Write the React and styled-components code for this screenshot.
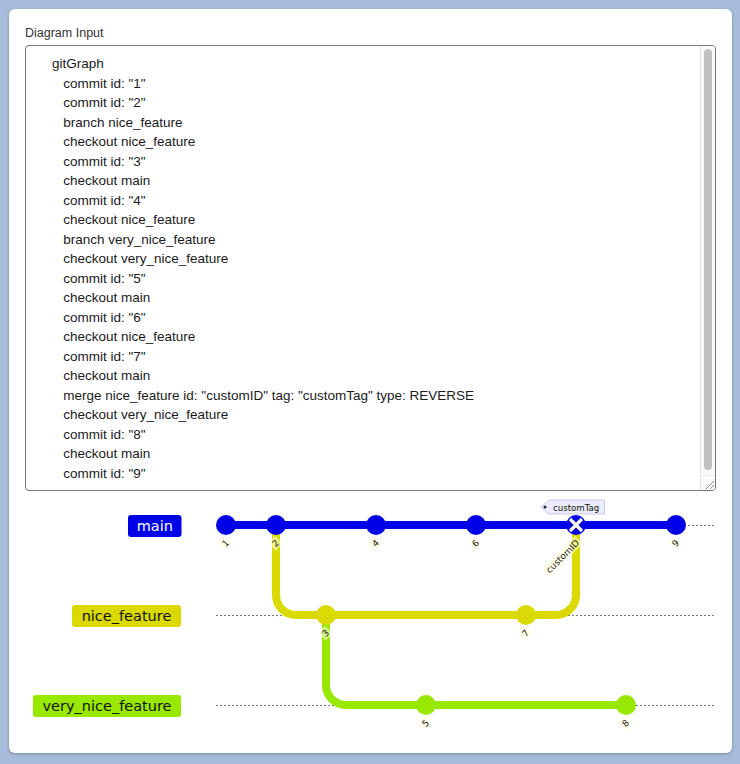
import React from 'react'
import styled, { createGlobalStyle } from 'styled-components'

const GlobalStyle = createGlobalStyle`
  html, body {
    margin: 0;
    padding: 0;
    background: #a7bcda;
  }
  body {
    font-family: "Liberation Sans", Arial, sans-serif;
  }
`

const Page = styled.div`
  padding: 9px 8px 11px 9px;
`

const Card = styled.div`
  width: 723px;
  box-sizing: border-box;
  padding: 16px 16px 8px;
  background: #fff;
  border-radius: 6px;
  box-shadow: 0 1px 3px rgba(0, 0, 0, 0.28);
`

const FieldLabel = styled.label`
  display: block;
  font-size: 12.5px;
  line-height: 16px;
  color: #333;
  margin-bottom: 4px;
`

const EditorFrame = styled.div`
  display: flex;
  height: 446px;
  box-sizing: border-box;
  border: 1px solid #767676;
  border-radius: 4px;
  overflow: hidden;
  background: #fff;
`

const Editor = styled.textarea`
  flex: 1;
  min-width: 0;
  margin: 0;
  padding: 8px 11px;
  border: none;
  resize: none;
  font-family: "Liberation Sans", Arial, sans-serif;
  font-size: 13.5px;
  line-height: 19.5px;
  color: #1a1a1a;
  background: transparent;
  overflow: hidden;
  white-space: pre;
  outline: none;
`

const ScrollTrack = styled.div`
  width: 15px;
  box-sizing: border-box;
  display: flex;
  flex-direction: column;
  background: #fafafa;
  border-left: 1px solid #e4e4e4;
`

const ScrollThumb = styled.div`
  flex: 1;
  margin: 3px 3px 5px 3px;
  border-radius: 4px;
  background: #c1c1c1;
`

const ResizeCorner = styled.div`
  height: 15px;
  display: flex;
  align-items: flex-end;
  justify-content: flex-end;
  border-top: 1px solid #ececec;
  box-sizing: border-box;
`

const Graph = styled.svg`
  display: block;
  width: 691px;
  height: 254px;
`

const BranchName = styled.text`
  font-family: "DejaVu Sans", Verdana, sans-serif;
  font-size: 14.5px;
  fill: ${p => p.$ink};
`

const CommitText = styled.text`
  font-family: "DejaVu Sans", Verdana, sans-serif;
  font-size: 9px;
  fill: #222;
`

const TagText = styled.text`
  font-family: "DejaVu Sans", Verdana, sans-serif;
  font-size: 8.6px;
  fill: #131300;
`

const source = `    gitGraph
       commit id: "1"
       commit id: "2"
       branch nice_feature
       checkout nice_feature
       commit id: "3"
       checkout main
       commit id: "4"
       checkout nice_feature
       branch very_nice_feature
       checkout very_nice_feature
       commit id: "5"
       checkout main
       commit id: "6"
       checkout nice_feature
       commit id: "7"
       checkout main
       merge nice_feature id: "customID" tag: "customTag" type: REVERSE
       checkout very_nice_feature
       commit id: "8"
       checkout main
       commit id: "9"
`

const BLUE = '#0000e8'
const YELLOW = '#dada00'
const GREEN = '#98e800'

const branches = [
  { name: 'main', y: 525, x0: 128, x1: 181.5, color: BLUE, ink: '#fff' },
  { name: 'nice_feature', y: 615, x0: 72, x1: 181, color: YELLOW, ink: '#111' },
  { name: 'very_nice_feature', y: 705, x0: 33, x1: 181, color: GREEN, ink: '#111' },
]

const commits = [
  { id: '1', x: 226, y: 525, color: BLUE },
  { id: '2', x: 276, y: 525, color: BLUE },
  { id: '3', x: 326, y: 615, color: YELLOW },
  { id: '4', x: 376, y: 525, color: BLUE },
  { id: '5', x: 426, y: 705, color: GREEN },
  { id: '6', x: 476, y: 525, color: BLUE },
  { id: '7', x: 526, y: 615, color: YELLOW },
  { id: 'customID', x: 576, y: 525, color: BLUE, reverse: true },
  { id: '8', x: 626, y: 705, color: GREEN },
  { id: '9', x: 676, y: 525, color: BLUE },
]

function CommitLabel({ id, x, y }) {
  const w = id.length > 1 ? 43 : 6
  return (
    <g transform={`translate(${x + 2.5} ${y + 17}) rotate(-45)`}>
      <rect x={-w - 2} y={-7} width={w + 4} height={11} fill="#ffffde" opacity="0.6" />
      <CommitText x={0} y={2} textAnchor="end">{id}</CommitText>
    </g>
  )
}

function GitGraph() {
  return (
    <Graph viewBox="25 491 691 254">
      {branches.map(b => (
        <g key={b.name}>
          <line x1={216} x2={715} y1={b.y + 0.5} y2={b.y + 0.5} stroke="#777" strokeWidth="1" strokeDasharray="2 2" />
          <rect x={b.x0} y={b.y - 10} width={b.x1 - b.x0} height={22} rx={3} fill={b.color} />
          <BranchName $ink={b.ink} x={(b.x0 + b.x1) / 2} y={b.y + 6} textAnchor="middle">{b.name}</BranchName>
        </g>
      ))}

      <path d="M226 525 L676 525" stroke={BLUE} strokeWidth="8" fill="none" />
      <path d="M276 525 L276 595 A20 20 0 0 0 296 615 L526 615" stroke={YELLOW} strokeWidth="8" fill="none" />
      <path d="M526 615 L556 615 A20 20 0 0 0 576 595 L576 525" stroke={YELLOW} strokeWidth="8" fill="none" />
      <path d="M326 615 L326 685 A20 20 0 0 0 346 705 L626 705" stroke={GREEN} strokeWidth="8" fill="none" />

      {commits.map(c => (
        <g key={c.id}>
          <circle cx={c.x} cy={c.y} r={10} fill={c.color} />
          {c.reverse && (
            <path
              d={`M${c.x - 6} ${c.y - 6} L${c.x + 6} ${c.y + 6} M${c.x + 6} ${c.y - 6} L${c.x - 6} ${c.y + 6}`}
              stroke="#fff"
              strokeWidth="3.2"
            />
          )}
        </g>
      ))}

      {commits.map(c => <CommitLabel key={c.id} {...c} />)}

      <polygon points="541,507 549,500 604.5,500 604.5,514 549,514" fill="#ececff" stroke="#c9c9f3" strokeWidth="1" />
      <circle cx={545} cy={507} r={1.5} fill="#222" />
      <TagText x={553} y={510.5}>customTag</TagText>
    </Graph>
  )
}

export default function App() {
  return (
    <>
      <GlobalStyle />
      <Page>
        <Card>
          <FieldLabel htmlFor="diagram">Diagram Input</FieldLabel>
          <EditorFrame>
            <Editor id="diagram" readOnly spellCheck={false} defaultValue={source} />
            <ScrollTrack>
              <ScrollThumb />
              <ResizeCorner>
                <svg width="12" height="12" viewBox="0 0 12 12">
                  <path d="M3 11 L11 3 M7 11 L11 7" stroke="#888" strokeWidth="1" />
                </svg>
              </ResizeCorner>
            </ScrollTrack>
          </EditorFrame>
          <GitGraph />
        </Card>
      </Page>
    </>
  )
}
